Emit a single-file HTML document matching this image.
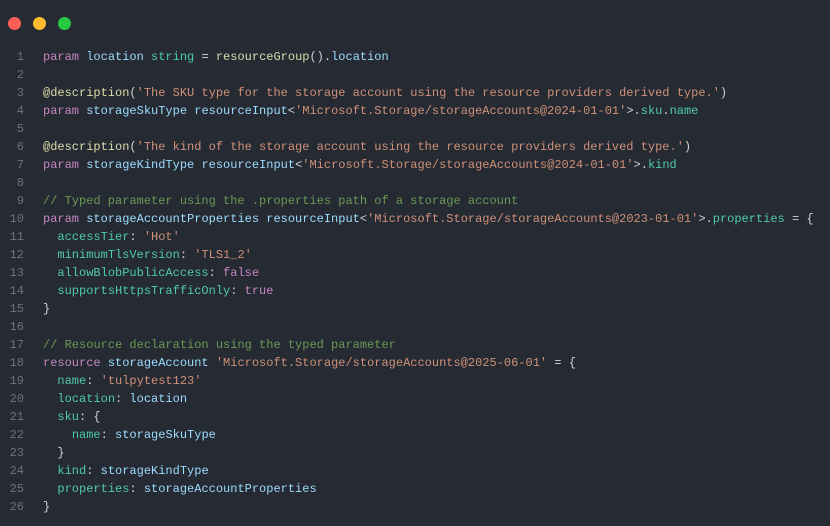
<!DOCTYPE html>
<html><head><meta charset="utf-8"><style>
html,body{margin:0;padding:0;background:#262a33;width:830px;height:526px;overflow:hidden}
.dots{position:absolute;top:17px;left:8px}
.dots span{position:absolute;width:13px;height:13px;border-radius:50%;top:0}
pre{position:absolute;left:0;top:48px;margin:0;font:12px/18px "Liberation Mono",monospace;color:#d4d4d4}
.n{display:inline-block;width:24px;text-align:right;color:#6b7280;margin-right:19px}
.k{color:#c586c0}.i{color:#9cdcfe}.t{color:#4ec9b0}.f{color:#dcdcaa}.s{color:#ce9178}.c{color:#6a9955}.p{color:#d4d4d4}
</style></head><body>
<div class="dots"><span style="left:0;background:#ff5f57"></span><span style="left:25px;background:#febc2e"></span><span style="left:50px;background:#28c840"></span></div>
<pre><span class="n">1</span><span class="k">param</span> <span class="i">location</span> <span class="t">string</span> = <span class="f">resourceGroup</span>().<span class="i">location</span>
<span class="n">2</span>
<span class="n">3</span><span class="f">@description</span>(<span class="s">'The SKU type for the storage account using the resource providers derived type.'</span>)
<span class="n">4</span><span class="k">param</span> <span class="i">storageSkuType</span> <span class="i">resourceInput</span>&lt;<span class="s">'Microsoft.Storage/storageAccounts@2024-01-01'</span>&gt;.<span class="t">sku</span>.<span class="t">name</span>
<span class="n">5</span>
<span class="n">6</span><span class="f">@description</span>(<span class="s">'The kind of the storage account using the resource providers derived type.'</span>)
<span class="n">7</span><span class="k">param</span> <span class="i">storageKindType</span> <span class="i">resourceInput</span>&lt;<span class="s">'Microsoft.Storage/storageAccounts@2024-01-01'</span>&gt;.<span class="t">kind</span>
<span class="n">8</span>
<span class="n">9</span><span class="c">// Typed parameter using the .properties path of a storage account</span>
<span class="n">10</span><span class="k">param</span> <span class="i">storageAccountProperties</span> <span class="i">resourceInput</span>&lt;<span class="s">'Microsoft.Storage/storageAccounts@2023-01-01'</span>&gt;.<span class="t">properties</span> = {
<span class="n">11</span>  <span class="t">accessTier</span>: <span class="s">'Hot'</span>
<span class="n">12</span>  <span class="t">minimumTlsVersion</span>: <span class="s">'TLS1_2'</span>
<span class="n">13</span>  <span class="t">allowBlobPublicAccess</span>: <span class="k">false</span>
<span class="n">14</span>  <span class="t">supportsHttpsTrafficOnly</span>: <span class="k">true</span>
<span class="n">15</span>}
<span class="n">16</span>
<span class="n">17</span><span class="c">// Resource declaration using the typed parameter</span>
<span class="n">18</span><span class="k">resource</span> <span class="i">storageAccount</span> <span class="s">'Microsoft.Storage/storageAccounts@2025-06-01'</span> = {
<span class="n">19</span>  <span class="t">name</span>: <span class="s">'tulpytest123'</span>
<span class="n">20</span>  <span class="t">location</span>: <span class="i">location</span>
<span class="n">21</span>  <span class="t">sku</span>: {
<span class="n">22</span>    <span class="t">name</span>: <span class="i">storageSkuType</span>
<span class="n">23</span>  }
<span class="n">24</span>  <span class="t">kind</span>: <span class="i">storageKindType</span>
<span class="n">25</span>  <span class="t">properties</span>: <span class="i">storageAccountProperties</span>
<span class="n">26</span>}</pre>
</body></html>
